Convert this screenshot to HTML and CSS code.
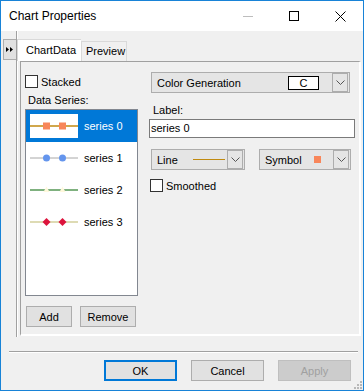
FILE: index.html
```html
<!DOCTYPE html>
<html lang="en">
  <head>
    <meta charset="UTF-8" />
    <title>Chart Properties</title>
    <link rel="stylesheet" href="styles.css">
  </head>
  <body>
    <div class="window">
      <!-- Title bar -->
      <div class="titlebar">
        <span class="title">Chart Properties</span>
        <div class="caption-btns">
          <span class="cap"><svg width="10" height="10"><line x1="0" y1="5.5" x2="10" y2="5.5" stroke="#bdbdbd" /></svg></span>
          <span class="cap"><svg width="10" height="10"><rect x="0.5" y="0.5" width="9" height="9" fill="none" stroke="#000" /></svg></span>
          <span class="cap"><svg width="11" height="11"><path d="M0.5 0.5 L10.5 10.5 M10.5 0.5 L0.5 10.5" stroke="#000" /></svg></span>
        </div>
      </div>

      <!-- Main area -->
      <div class="main">
        <div class="strip">
          <div class="collapse">
            <svg width="8" height="5"><polygon points="0,0 3,2.5 0,5" fill="#000" /><polygon points="4,0 7,2.5 4,5" fill="#000" /></svg>
          </div>
        </div>
        <div class="panel">
          <div class="tabs">
            <span class="tab active">ChartData</span>
            <span class="tab">Preview</span>
          </div>
          <div class="page">
            <div class="col-left">
              <div class="check"><span class="box"></span>Stacked</div>
              <div class="caption">Data Series:</div>
              <ul class="series-list">
                <li class="selected">
                  <svg class="swatch" width="48" height="24">
                    <line x1="0" y1="12" x2="48" y2="12" stroke="#c08a10" stroke-width="1.5" />
                    <rect x="13" y="8.5" width="7" height="7" fill="#f8865a" />
                    <rect x="29" y="8.5" width="7" height="7" fill="#f8865a" />
                  </svg>
                  series 0
                </li>
                <li>
                  <svg class="swatch" width="48" height="24">
                    <line x1="0" y1="12" x2="48" y2="12" stroke="#a8a8a8" />
                    <circle cx="16.5" cy="12" r="3.5" fill="#6495ed" />
                    <circle cx="32.5" cy="12" r="3.5" fill="#6495ed" />
                  </svg>
                  series 1
                </li>
                <li>
                  <svg class="swatch" width="48" height="24">
                    <line x1="0" y1="12" x2="48" y2="12" stroke="#006400" stroke-width="1.2" />
                    <polygon points="16.5,8.5 19.5,14 13.5,14" fill="#fff8dc" />
                    <polygon points="32.5,8.5 35.5,14 29.5,14" fill="#fff8dc" />
                  </svg>
                  series 2
                </li>
                <li>
                  <svg class="swatch" width="48" height="24">
                    <line x1="0" y1="12" x2="48" y2="12" stroke="#bdb76b" stroke-width="1.2" />
                    <polygon points="16.5,8 20.5,12 16.5,16 12.5,12" fill="#dc143c" />
                    <polygon points="32.5,8 36.5,12 32.5,16 28.5,12" fill="#dc143c" />
                  </svg>
                  series 3
                </li>
              </ul>
              <div class="list-btns">
                <button class="btn btn-add">Add</button>
                <button class="btn btn-remove">Remove</button>
              </div>
            </div>

            <div class="col-right">
              <div class="combo combo-wide">
                <span class="combo-text">Color Generation</span>
                <span class="color-box">C</span>
                <span class="drop"><svg width="9" height="5"><polyline points="0.5,0.5 4.5,4.5 8.5,0.5" fill="none" stroke="#555" /></svg></span>
              </div>
              <div class="caption label-caption">Label:</div>
              <div class="textbox">series 0</div>
              <div class="combo-row">
                <div class="combo combo-line">
                  <span class="combo-text">Line</span>
                  <span class="line-sample"></span>
                  <span class="drop"><svg width="9" height="5"><polyline points="0.5,0.5 4.5,4.5 8.5,0.5" fill="none" stroke="#555" /></svg></span>
                </div>
                <div class="combo combo-symbol">
                  <span class="combo-text">Symbol</span>
                  <span class="symbol-sample"></span>
                  <span class="drop"><svg width="9" height="5"><polyline points="0.5,0.5 4.5,4.5 8.5,0.5" fill="none" stroke="#555" /></svg></span>
                </div>
              </div>
              <div class="check check-smooth"><span class="box"></span>Smoothed</div>
            </div>
          </div>
        </div>
      </div>

      <!-- Dialog buttons -->
      <div class="footer">
        <div class="separator"></div>
        <div class="dialog-btns">
          <button class="btn btn-dialog btn-default">OK</button>
          <button class="btn btn-dialog">Cancel</button>
          <button class="btn btn-dialog" disabled>Apply</button>
        </div>
        <svg class="grip" width="9" height="9">
          <rect x="7" y="1" width="2" height="2" fill="#b8b8b8" />
          <rect x="4" y="4" width="2" height="2" fill="#b8b8b8" />
          <rect x="7" y="4" width="2" height="2" fill="#b8b8b8" />
          <rect x="1" y="7" width="2" height="2" fill="#b8b8b8" />
          <rect x="4" y="7" width="2" height="2" fill="#b8b8b8" />
          <rect x="7" y="7" width="2" height="2" fill="#b8b8b8" />
        </svg>
      </div>
    </div>
  </body>
</html>
```

FILE: styles.css
```css
/* Global */
* {
  box-sizing: border-box;
}

body {
  margin: 0;
  font-family: "Liberation Sans", Arial, sans-serif;
  font-size: 11px;
  color: #000;
}

.window {
  width: 364px;
  height: 391px;
  border: 1px solid #1883d7;
  background: #f0f0f0;
  display: flex;
  flex-direction: column;
}

/* Title bar */
.titlebar {
  height: 30px;
  background: #fff;
  display: flex;
  align-items: center;
}

.title {
  flex: 1;
  padding-left: 8px;
  font-size: 12px;
}

.caption-btns {
  display: flex;
  height: 30px;
}

.cap {
  width: 46px;
  display: flex;
  align-items: center;
  justify-content: center;
}

/* Main area */
.main {
  height: 306px;
  display: flex;
}

.strip {
  width: 15px;
  padding: 8px 0 0 2px;
}

.collapse {
  width: 13px;
  height: 21px;
  border: 1px solid #adadad;
  border-right: none;
  background: #e1e1e1;
  display: flex;
  align-items: center;
  justify-content: center;
}

.panel {
  width: 345px;
  border-left: 1px solid #a0a0a0;
  box-shadow: inset 1px 0 #fff;
  padding: 8px 0 1px 0;
  display: flex;
  flex-direction: column;
}

/* Tabs */
.tabs {
  height: 22px;
  display: flex;
  align-items: flex-end;
}

.tab {
  height: 20px;
  line-height: 19px;
  padding: 0 4px;
  border: 1px solid #d9d9d9;
  border-bottom: none;
  width: 46px;
}

.tab.active {
  height: 22px;
  line-height: 21px;
  width: 64px;
  padding-left: 8px;
  background: #fff;
  border-right: none;
}

.page {
  flex: 1;
  margin-left: 3px;
  border-top: 1px solid #a0a0a0;
  border-left: 1px solid #a0a0a0;
  border-right: 2px solid #fff;
  border-bottom: 2px solid #fff;
  padding: 0 4px;
  display: grid;
  grid-template-columns: 113px 206px;
  column-gap: 11px;
  align-items: start;
}

/* Checkboxes */
.check {
  display: flex;
  align-items: center;
  gap: 3px;
  height: 13px;
}

.box {
  width: 13px;
  height: 13px;
  border: 1px solid #333;
  background: #fff;
}

.caption {
  height: 13px;
  line-height: 13px;
  padding-left: 3px;
}

/* Left column */
.col-left {
  padding-top: 13px;
}

.col-left .caption {
  margin-top: 6px;
}

.series-list {
  list-style: none;
  margin: 2px 0 0 0;
  padding: 0;
  height: 187px;
  border: 1px solid #828790;
  background: #fff;
}

.series-list li {
  height: 32px;
  display: flex;
  align-items: center;
  gap: 6px;
  padding-left: 4px;
}

.series-list li.selected {
  background: #0078d7;
  color: #fff;
}

.swatch {
  display: block;
  background: #fff;
}

.list-btns {
  display: flex;
  gap: 8px;
  margin-top: 10px;
  padding-left: 1px;
}

.btn {
  height: 21px;
  border: 1px solid #adadad;
  background: #e1e1e1;
  font-family: "Liberation Sans", Arial, sans-serif;
  font-size: 11px;
  color: #000;
  padding: 0;
}

.btn-add {
  width: 46px;
}

.btn-remove {
  width: 56px;
}

/* Right column */
.col-right {
  padding-top: 10px;
}

.combo {
  height: 21px;
  border: 1px solid #adadad;
  background: #e5e5e5;
  display: flex;
  align-items: center;
}

.combo-text {
  padding-left: 5px;
  flex: 1;
}

.drop {
  width: 16px;
  height: 19px;
  border: 1px solid #adadad;
  background: #e5e5e5;
  display: flex;
  align-items: center;
  justify-content: center;
  margin-right: 1px;
}

.combo-wide {
  width: 199px;
  margin-left: 2px;
}

.color-box {
  width: 31px;
  height: 14px;
  border: 1px solid #000;
  background: #fff;
  text-align: center;
  line-height: 12px;
  margin-right: 13px;
}

.label-caption {
  margin-top: 11px;
  padding-left: 4px;
}

.textbox {
  margin-top: 2px;
  height: 19px;
  border: 1px solid #7a7a7a;
  background: #fff;
  padding-left: 1px;
  line-height: 17px;
}

.combo-row {
  display: flex;
  gap: 14px;
  margin-top: 11px;
  padding-left: 2px;
}

.combo-line {
  width: 94px;
}

.combo-symbol {
  width: 92px;
}

.line-sample {
  width: 32px;
  height: 1px;
  background: #c08a10;
  margin-right: 2px;
}

.symbol-sample {
  width: 7px;
  height: 7px;
  background: #f8865a;
  margin-right: 12px;
}

.check-smooth {
  margin-top: 9px;
  padding-left: 1px;
}

/* Footer */
.footer {
  flex: 1;
  position: relative;
  padding: 14px 5px 0 8px;
}

.separator {
  height: 2px;
  border-top: 1px solid #a0a0a0;
  border-bottom: 1px solid #fff;
}

.dialog-btns {
  display: flex;
  justify-content: flex-end;
  gap: 14px;
  margin-top: 7px;
  padding-right: 7px;
}

.btn-dialog {
  width: 73px;
}

.btn-default {
  border: 2px solid #0078d7;
}

.btn-dialog:disabled {
  background: #cccccc;
  border-color: #bfbfbf;
  color: #a0a0a0;
}

.grip {
  position: absolute;
  right: 1px;
  bottom: 1px;
}
```
